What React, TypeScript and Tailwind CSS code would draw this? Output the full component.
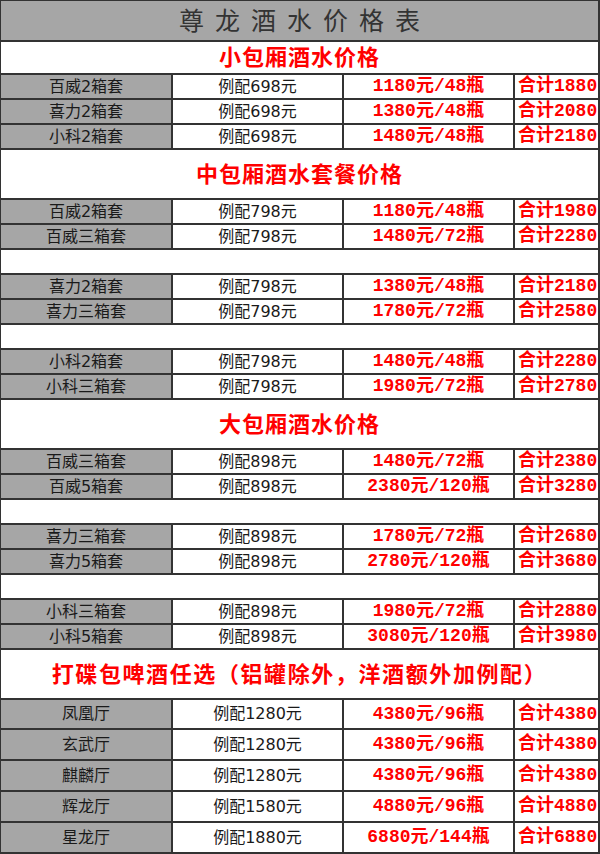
type Row =
  | { kind: "section"; text: string; h: string; track: string }
  | { kind: "blank" }
  | { kind: "data"; name: string; note: string; price: string; total: string; h: string };

const item = (name: string, note: string, price: string, total: string, h = "h-[25px]"): Row => ({
  kind: "data",
  name,
  note,
  price,
  total,
  h,
});

const rows: Row[] = [
  { kind: "section", text: "小包厢酒水价格", h: "h-[33px]", track: "tracking-[1px]" },
  item("百威2箱套", "例配698元", "1180元/48瓶", "合计1880"),
  item("喜力2箱套", "例配698元", "1380元/48瓶", "合计2080"),
  item("小科2箱套", "例配698元", "1480元/48瓶", "合计2180"),
  { kind: "section", text: "中包厢酒水套餐价格", h: "h-[50px]", track: "tracking-[1px]" },
  item("百威2箱套", "例配798元", "1180元/48瓶", "合计1980"),
  item("百威三箱套", "例配798元", "1480元/72瓶", "合计2280"),
  { kind: "blank" },
  item("喜力2箱套", "例配798元", "1380元/48瓶", "合计2180"),
  item("喜力三箱套", "例配798元", "1780元/72瓶", "合计2580"),
  { kind: "blank" },
  item("小科2箱套", "例配798元", "1480元/48瓶", "合计2280"),
  item("小科三箱套", "例配798元", "1980元/72瓶", "合计2780"),
  { kind: "section", text: "大包厢酒水价格", h: "h-[50px]", track: "tracking-[1px]" },
  item("百威三箱套", "例配898元", "1480元/72瓶", "合计2380"),
  item("百威5箱套", "例配898元", "2380元/120瓶", "合计3280"),
  { kind: "blank" },
  item("喜力三箱套", "例配898元", "1780元/72瓶", "合计2680"),
  item("喜力5箱套", "例配898元", "2780元/120瓶", "合计3680"),
  { kind: "blank" },
  item("小科三箱套", "例配898元", "1980元/72瓶", "合计2880"),
  item("小科5箱套", "例配898元", "3080元/120瓶", "合计3980"),
  {
    kind: "section",
    text: "打碟包啤酒任选（铝罐除外，洋酒额外加例配）",
    h: "h-[50px]",
    track: "tracking-[1.6px]",
  },
  item("凤凰厅", "例配1280元", "4380元/96瓶", "合计4380", "h-[30px]"),
  item("玄武厅", "例配1280元", "4380元/96瓶", "合计4380", "h-[31px]"),
  item("麒麟厅", "例配1280元", "4380元/96瓶", "合计4380", "h-[31px]"),
  item("辉龙厅", "例配1580元", "4880元/96瓶", "合计4880", "h-[31px]"),
  item("星龙厅", "例配1880元", "6880元/144瓶", "合计6880", "h-[31px]"),
];

const plain = "font-['DejaVu_Sans','Noto_Sans_CJK_SC',sans-serif] text-[16px] text-[#1a1a1a]";
const red = "font-['Liberation_Mono','Noto_Sans_CJK_SC',monospace] font-bold text-[18px] text-[#ff0000]";

const App = () => {
  return (
    <div className="w-[600px] h-[854px] bg-white border-t border-l border-r-2 border-b-2 border-[#333] flex flex-col">
      <div className="h-[41px] shrink-0 bg-[#a6a6a6] border-b-2 border-[#333] flex items-center justify-center">
        <h1 className="font-['Noto_Sans_CJK_SC',serif] text-[25px] tracking-[11px] pl-[11px] pb-[1px] text-[#333] font-normal">
          尊龙酒水价格表
        </h1>
      </div>

      {rows.map((row, i) => {
        if (row.kind === "section") {
          return (
            <div
              key={i}
              className={`${row.h} shrink-0 border-b-2 border-[#333] flex items-center justify-center`}
            >
              <h2
                className={`font-['Liberation_Serif','Noto_Sans_CJK_SC',serif] font-bold text-[22px] text-[#ff0000] ${row.track}`}
              >
                {row.text}
              </h2>
            </div>
          );
        }

        if (row.kind === "blank") {
          return <div key={i} className="h-[25px] shrink-0 border-b-2 border-[#333]" />;
        }

        return (
          <div key={i} className={`${row.h} shrink-0 border-b-2 border-[#333] flex`}>
            <div className={`w-[172px] shrink-0 bg-[#a6a6a6] border-r-2 border-[#333] flex items-center justify-center ${plain}`}>
              {row.name}
            </div>
            <div className={`w-[171px] shrink-0 border-r-2 border-[#333] flex items-center justify-center ${plain}`}>
              {row.note}
            </div>
            <div className={`w-[171px] shrink-0 border-r-2 border-[#333] flex items-center justify-center ${red}`}>
              {row.price}
            </div>
            <div className={`flex-1 flex items-center pl-[3px] whitespace-nowrap ${red}`}>{row.total}</div>
          </div>
        );
      })}
    </div>
  );
};

export default App;
